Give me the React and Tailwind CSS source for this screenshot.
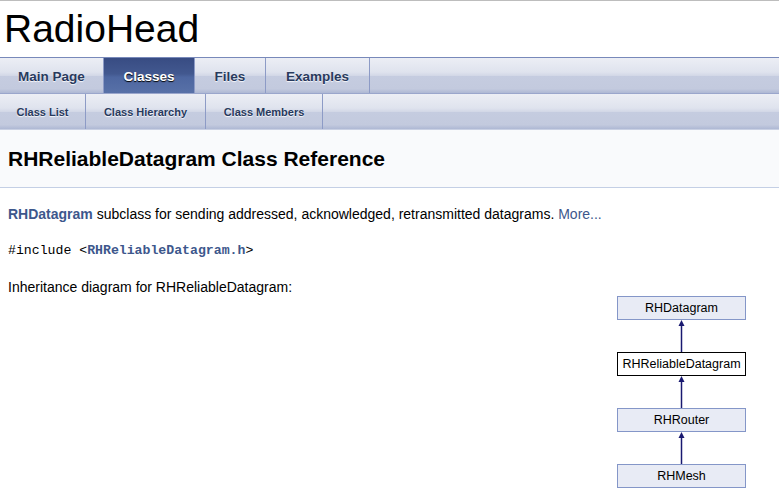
import React from 'react';

const tabBg =
  'bg-[linear-gradient(to_bottom,#eceef5_0%,#dfe3ee_40%,#d3d8e7_50%,#c5cce0_52%,#c3cade_88%,#aeb8d4_100%)]';

function Tab({ label, width, active, small }) {
  return (
    <div
      className={
        'flex h-full items-center justify-center border-r border-[#8d9bc6] font-bold ' +
        width +
        ' ' +
        (small ? 'pt-[2px] text-[11px] ' : 'pt-[3px] text-[13.5px] ') +
        (active
          ? 'bg-[linear-gradient(to_bottom,#384c83_0%,#42588f_45%,#4d66a0_55%,#5871a8_100%)] text-white [text-shadow:0_1px_1px_rgba(0,0,0,1)]'
          : 'text-[#283a5d] [text-shadow:0_1px_1px_rgba(255,255,255,0.9)]')
      }
    >
      {label}
    </div>
  );
}

function Box({ label, current }) {
  return (
    <div
      className={
        'flex h-[24px] w-[129px] items-center justify-center border text-[12.5px] text-black ' +
        (current ? 'border-black bg-white' : 'border-[#8496c8] bg-[#e8ebf5]')
      }
    >
      {label}
    </div>
  );
}

function Arrow() {
  return (
    <svg width="129" height="32" viewBox="0 0 129 32" className="block">
      <line x1="64.5" y1="4" x2="64.5" y2="32" stroke="#191970" strokeWidth="1.5" />
      <polygon points="64.5,0 61.5,6 67.5,6" fill="#191970" />
    </svg>
  );
}

export default function App() {
  return (
    <div className="w-[779px] bg-white font-['Liberation_Sans',Arial,sans-serif]">
      {/* header */}
      <div className="h-[57px] border-t border-[#bdbdbd] pl-[4px]">
        <div className="pt-[6px] text-[39px] leading-[44px] text-black">RadioHead</div>
      </div>

      {/* tabs */}
      <div className={'flex h-[37px] border-t border-[#7889ba] border-b border-b-[#9aa6cc] ' + tabBg}>
        <Tab label="Main Page" width="w-[104px]" />
        <Tab label="Classes" width="w-[91px]" active />
        <Tab label="Files" width="w-[71px]" />
        <Tab label="Examples" width="w-[104px]" />
      </div>
      <div className={'flex h-[36px] border-b border-[#c9d0e3] ' + tabBg}>
        <Tab label="Class List" width="w-[86px]" small />
        <Tab label="Class Hierarchy" width="w-[120px]" small />
        <Tab label="Class Members" width="w-[117px]" small />
      </div>

      {/* title */}
      <div className="flex h-[58px] items-center border-b border-[#c4cfe5] bg-[#f9fafc] pl-[8px]">
        <div className="text-[21px] font-bold text-black">RHReliableDatagram Class Reference</div>
      </div>

      {/* contents */}
      <div className="px-[8px] text-[14px] text-black">
        <p className="mt-[18px] leading-[17px]">
          <span className="font-bold text-[#3d578c]">RHDatagram</span> subclass for sending addressed,
          acknowledged, retransmitted datagrams. <span className="text-[#3d578c]">More...</span>
        </p>
        <p className="mt-[19px] font-['Liberation_Mono',monospace] text-[13.2px] leading-[17px]">
          #include &lt;<span className="font-bold text-[#3d578c]">RHReliableDatagram.h</span>&gt;
        </p>
        <p className="mt-[20px] leading-[17px]">Inheritance diagram for RHReliableDatagram:</p>
      </div>

      {/* diagram */}
      <div className="ml-[617px] mt-0 flex w-[129px] flex-col pb-[15px]">
        <Box label="RHDatagram" />
        <Arrow />
        <Box label="RHReliableDatagram" current />
        <Arrow />
        <Box label="RHRouter" />
        <Arrow />
        <Box label="RHMesh" />
      </div>
    </div>
  );
}
